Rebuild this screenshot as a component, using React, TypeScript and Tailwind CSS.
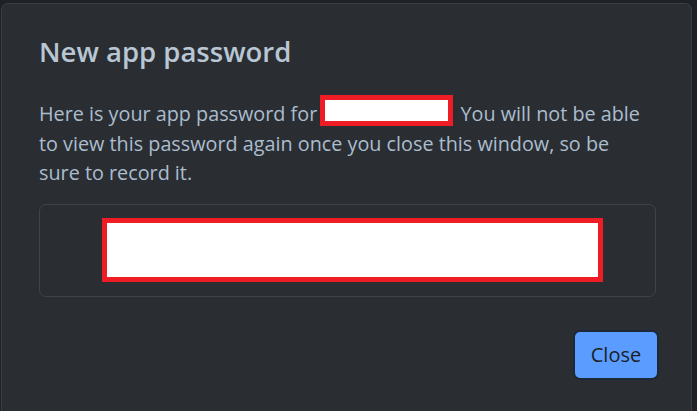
export default function App() {
  return (
    <div className="w-[697px] h-[411px] overflow-hidden bg-[#1e2125] pl-px pt-[3px] pr-[5px] font-['Open_Sans',sans-serif]">
      <div className="h-[420px] bg-[#2a2e33] border border-[#3a3f46] rounded-t-[7px] flex flex-col">
        <div className="pl-[37px] pt-[29px]">
          <h1 className="text-[27.5px] leading-[38px] font-semibold text-[#b9c6d3]">New app password</h1>
        </div>
        <div className="pl-[37px] pr-[35px] pt-[24px] text-[19.8px] leading-[29.5px] text-[#abbdce]">
          <p className="pr-[11px]">
            Here is your app password for{" "}
            <span className="inline-block align-[-5px] ml-[-2px] mr-[2px] w-[133px] h-[31px] bg-white border-[5px] border-[#ee1c25]"></span>{" "}
            You will not be able to view this password again once you close this window, so be sure to record it.
          </p>
          <div className="mt-[16px] h-[93px] border border-[#3d434a] rounded-[7px] flex items-center pl-[62px]">
            <div className="w-[501px] h-[64px] bg-white border-[5px] border-[#ee1c25]"></div>
          </div>
          <div className="flex justify-end mt-[33px] mr-[-3px]">
            <button className="w-[86px] h-[50px] rounded-[7px] bg-[#5a9cff] border-2 border-[#1d2838] text-[20px] text-[#1b1f24]">Close</button>
          </div>
        </div>
      </div>
    </div>
  );
}
